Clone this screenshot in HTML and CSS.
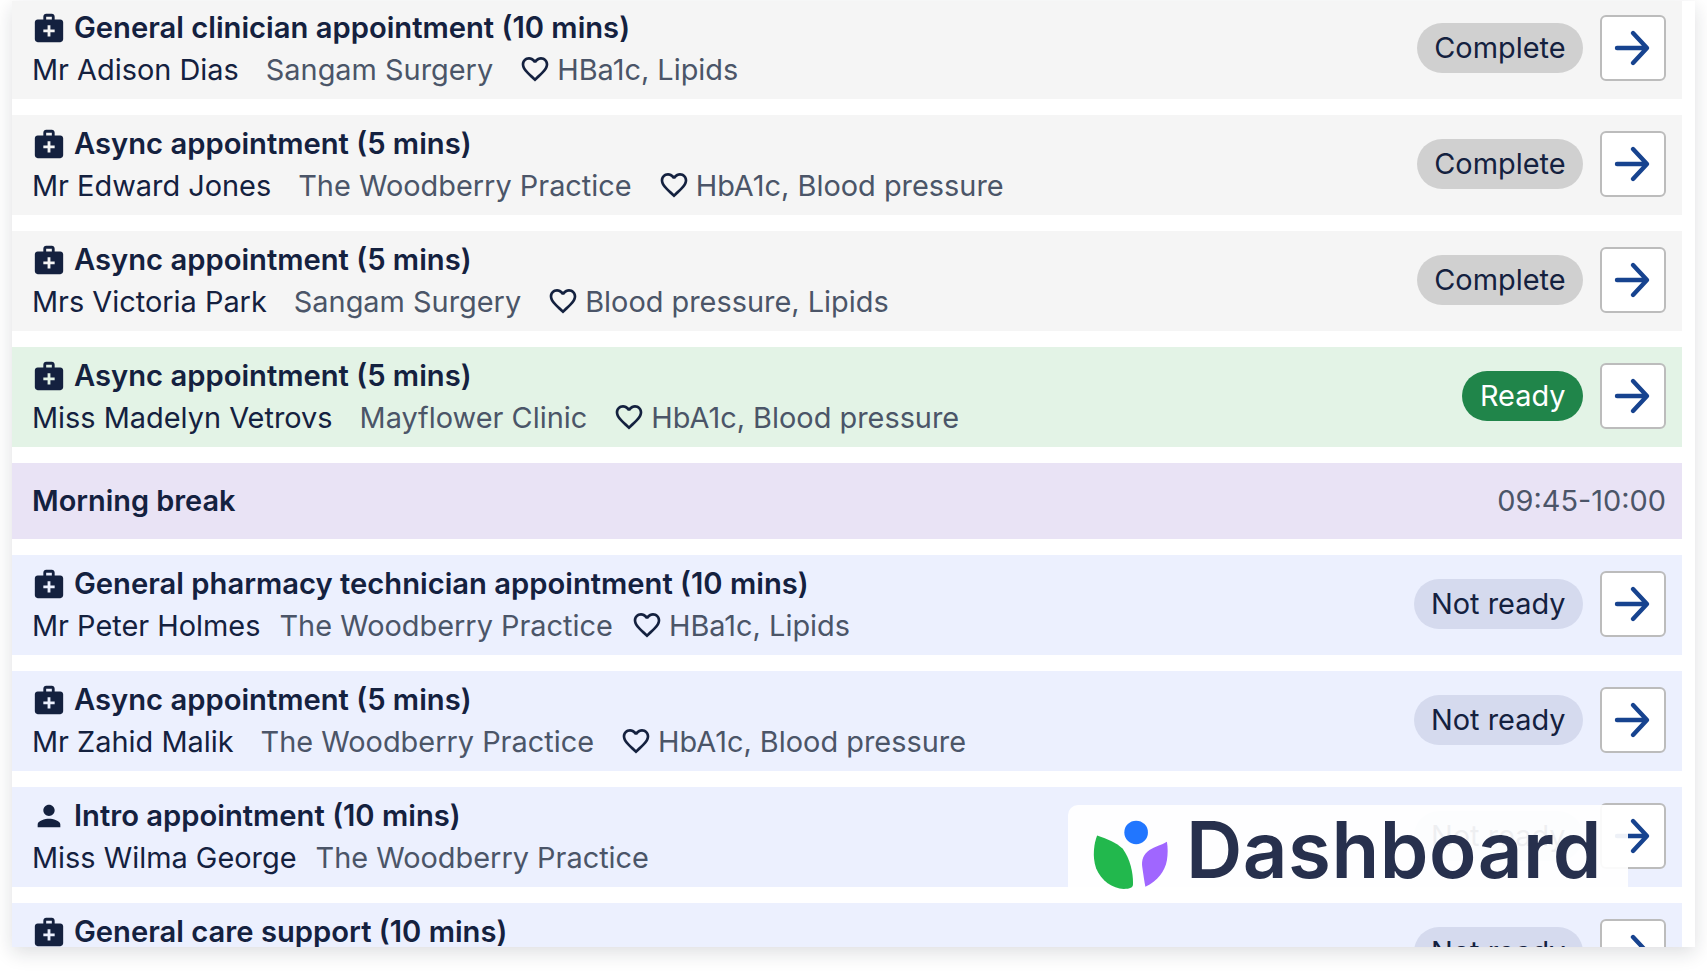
FILE: index.html
```html
<!DOCTYPE html>
<html lang="en">
<head>
<meta charset="utf-8">
<title>Dashboard</title>
<link rel="stylesheet" href="styles.css">
</head>
<body>
<svg class="sprite" width="0" height="0" aria-hidden="true">
  <symbol id="i-case" viewBox="0 0 24 24"><path d="M20 6h-4V4c0-1.1-.9-2-2-2h-4c-1.1 0-2 .9-2 2v2H4c-1.1 0-2 .9-2 2v12c0 1.1.9 2 2 2h16c1.1 0 2-.9 2-2V8c0-1.1-.9-2-2-2zM10 4h4v2h-4V4zm6 11h-3v3h-2v-3H8v-2h3v-3h2v3h3v2z"/></symbol>
  <symbol id="i-person" viewBox="0 0 24 24"><path d="M12 12c2.21 0 4-1.79 4-4s-1.79-4-4-4-4 1.79-4 4 1.79 4 4 4zm0 2c-2.67 0-8 1.34-8 4v2h16v-2c0-2.66-5.33-4-8-4z"/></symbol>
  <symbol id="i-heart" viewBox="0 0 24 24"><path d="M16.5 3c-1.74 0-3.41.81-4.5 2.09C10.91 3.81 9.24 3 7.5 3 4.42 3 2 5.42 2 8.5c0 3.78 3.4 6.86 8.55 11.54L12 21.35l1.45-1.32C18.6 15.36 22 12.28 22 8.5 22 5.42 19.58 3 16.5 3zm-4.4 15.55l-.1.1-.1-.1C7.14 14.24 4 11.39 4 8.5 4 6.5 5.5 5 7.5 5c1.54 0 3.04.99 3.57 2.36h1.87C13.46 5.99 14.96 5 16.5 5c2 0 3.5 1.5 3.5 3.5 0 2.89-3.14 5.74-7.9 10.05z"/></symbol>
  <symbol id="i-arrow" viewBox="0 0 66 66"><path d="M17 33h29M33 18l14 15-14 15"/></symbol>
</svg>
<main class="panel">
  <div class="list">
    <article class="row row-done">
      <div class="info">
        <h2 class="title"><svg class="icon"><use href="#i-case"/></svg>General clinician appointment (10 mins)</h2>
        <p class="meta"><span>Mr Adison Dias</span><span class="clinic">Sangam Surgery</span><span class="tests"><svg class="heart"><use href="#i-heart"/></svg>HBa1c, Lipids</span></p>
      </div>
      <span class="pill pill-done">Complete</span>
      <button class="go" aria-label="Open"><svg class="arrow"><use href="#i-arrow"/></svg></button>
    </article>
    <article class="row row-done">
      <div class="info">
        <h2 class="title"><svg class="icon"><use href="#i-case"/></svg>Async appointment (5 mins)</h2>
        <p class="meta"><span>Mr Edward Jones</span><span class="clinic">The Woodberry Practice</span><span class="tests"><svg class="heart"><use href="#i-heart"/></svg>HbA1c, Blood pressure</span></p>
      </div>
      <span class="pill pill-done">Complete</span>
      <button class="go" aria-label="Open"><svg class="arrow"><use href="#i-arrow"/></svg></button>
    </article>
    <article class="row row-done">
      <div class="info">
        <h2 class="title"><svg class="icon"><use href="#i-case"/></svg>Async appointment (5 mins)</h2>
        <p class="meta"><span>Mrs Victoria Park</span><span class="clinic">Sangam Surgery</span><span class="tests"><svg class="heart"><use href="#i-heart"/></svg>Blood pressure, Lipids</span></p>
      </div>
      <span class="pill pill-done">Complete</span>
      <button class="go" aria-label="Open"><svg class="arrow"><use href="#i-arrow"/></svg></button>
    </article>
    <article class="row row-ready">
      <div class="info">
        <h2 class="title"><svg class="icon"><use href="#i-case"/></svg>Async appointment (5 mins)</h2>
        <p class="meta"><span>Miss Madelyn Vetrovs</span><span class="clinic">Mayflower Clinic</span><span class="tests"><svg class="heart"><use href="#i-heart"/></svg>HbA1c, Blood pressure</span></p>
      </div>
      <span class="pill pill-ready">Ready</span>
      <button class="go" aria-label="Open"><svg class="arrow"><use href="#i-arrow"/></svg></button>
    </article>
    <section class="break">
      <strong>Morning break</strong>
      <span class="time">09:45-10:00</span>
    </section>
    <article class="row row-wait">
      <div class="info">
        <h2 class="title"><svg class="icon"><use href="#i-case"/></svg>General pharmacy technician appointment (10 mins)</h2>
        <p class="meta meta-tight"><span>Mr Peter Holmes</span><span class="clinic">The Woodberry Practice</span><span class="tests"><svg class="heart"><use href="#i-heart"/></svg>HBa1c, Lipids</span></p>
      </div>
      <span class="pill pill-wait">Not ready</span>
      <button class="go" aria-label="Open"><svg class="arrow"><use href="#i-arrow"/></svg></button>
    </article>
    <article class="row row-wait">
      <div class="info">
        <h2 class="title"><svg class="icon"><use href="#i-case"/></svg>Async appointment (5 mins)</h2>
        <p class="meta"><span>Mr Zahid Malik</span><span class="clinic">The Woodberry Practice</span><span class="tests"><svg class="heart"><use href="#i-heart"/></svg>HbA1c, Blood pressure</span></p>
      </div>
      <span class="pill pill-wait">Not ready</span>
      <button class="go" aria-label="Open"><svg class="arrow"><use href="#i-arrow"/></svg></button>
    </article>
    <article class="row row-wait">
      <div class="info">
        <h2 class="title"><svg class="icon"><use href="#i-person"/></svg>Intro appointment (10 mins)</h2>
        <p class="meta meta-tight"><span>Miss Wilma George</span><span class="clinic">The Woodberry Practice</span></p>
      </div>
      <span class="pill pill-wait">Not ready</span>
      <button class="go" aria-label="Open"><svg class="arrow"><use href="#i-arrow"/></svg></button>
    </article>
    <article class="row row-wait">
      <div class="info">
        <h2 class="title"><svg class="icon"><use href="#i-case"/></svg>General care support (10 mins)</h2>
      </div>
      <span class="pill pill-wait">Not ready</span>
      <button class="go" aria-label="Open"><svg class="arrow"><use href="#i-arrow"/></svg></button>
    </article>
  </div>
  <div class="brand">
    <svg class="logo" viewBox="0 0 76 68" aria-hidden="true">
      <circle cx="43" cy="13" r="11.5" fill="#2176ff"/>
      <path fill="#22b84d" d="M5 16C2 24 0 36 4 48c5 12 16 20 27 20 6 0 9-1 9-5 0-12-3-24-10-34C24 23 14 19 5 16z"/>
      <path fill="#a066ff" d="M73 22c-5 3-12 5-17 8-6 4-8 10-7 17 1 7 2 14 3 19 12-6 19-15 21-26 1-6 1-12 0-18z"/>
    </svg>
    <span class="word">Dashboard</span>
  </div>
</main>
</body>
</html>
```

FILE: styles.css
```css
* { box-sizing: border-box; }
html, body { margin: 0; height: 100%; background: #fff; overflow: hidden; }
body { font-family: Inter, "Liberation Sans", sans-serif; color: #14213f; font-size: 28.9px; padding: 1px 0 0 12px; }
.sprite { position: absolute; }

.panel {
  position: relative;
  width: 1683px;
  height: 946px;
  padding-right: 13px;
  overflow: hidden;
  background: #fff;
  box-shadow: 0 6px 18px rgba(20, 25, 40, .14);
}
.list { display: flex; flex-direction: column; gap: 16.5px; margin-top: -2px; }

.row {
  flex: none;
  height: 99.5px;
  display: flex;
  align-items: flex-start;
  padding: 8px 16px 0 20px;
}
.row-done { background: #f5f5f5; }
.row-ready { background: #e3f3e6; }
.row-wait { background: #ecf0fe; }

.info { flex: 1; min-width: 0; }
.title {
  display: flex;
  align-items: center;
  gap: 8px;
  margin: 0;
  font-size: 29.2px;
  line-height: 41px;
  font-weight: 600;
}
.icon { width: 34px; height: 34px; fill: #14213f; flex: none; }

.meta {
  display: flex;
  gap: 27px;
  margin: 0.5px 0 0;
  line-height: 41px;
  font-weight: 400;
}
.meta-tight { gap: 19px; }
.clinic { color: #4b5568; }
.tests { display: inline-flex; align-items: center; gap: 3px; margin-left: -1px; color: #4b5568; }
.heart { width: 32px; height: 32px; fill: #14213f; flex: none; margin-right: 3px; }

.pill {
  flex: none;
  height: 50px;
  margin-top: 16px;
  padding: 0 17.5px;
  border-radius: 25px;
  line-height: 50px;
}
.pill-done { background: #d0d0d0; }
.pill-ready { background: #20854a; color: #fff; }
.pill-wait { background: #d5daee; }

.go {
  flex: none;
  width: 66px;
  height: 66px;
  margin: 8px 0 0 17px;
  padding: 0;
  border: 2px solid #bcbcbc;
  border-radius: 6px;
  background: #fff;
  display: flex;
  align-items: center;
  justify-content: center;
}
.arrow { width: 66px; height: 66px; flex: none; fill: none; stroke: #17438f; stroke-width: 4.4; stroke-linecap: round; stroke-linejoin: round; }

.break {
  flex: none;
  height: 75.5px;
  display: flex;
  align-items: center;
  justify-content: space-between;
  padding: 0 16px 0 20px;
  background: #e9e3f5;
}
.break strong { font-weight: 600; font-size: 28.9px; }
.time { color: #4b5568; }

.brand {
  position: absolute;
  left: 1056px;
  top: 804px;
  width: 560px;
  height: 98px;
  display: flex;
  align-items: center;
  gap: 16px;
  padding-left: 24px;
  border-radius: 10px 10px 0 0;
  background: rgba(255, 255, 255, .93);
}
.logo { width: 78px; height: 70px; flex: none; }
.word { margin-top: -8px; font-size: 78px; line-height: 98px; font-weight: 600; color: #27304d; letter-spacing: .5px; }
```
